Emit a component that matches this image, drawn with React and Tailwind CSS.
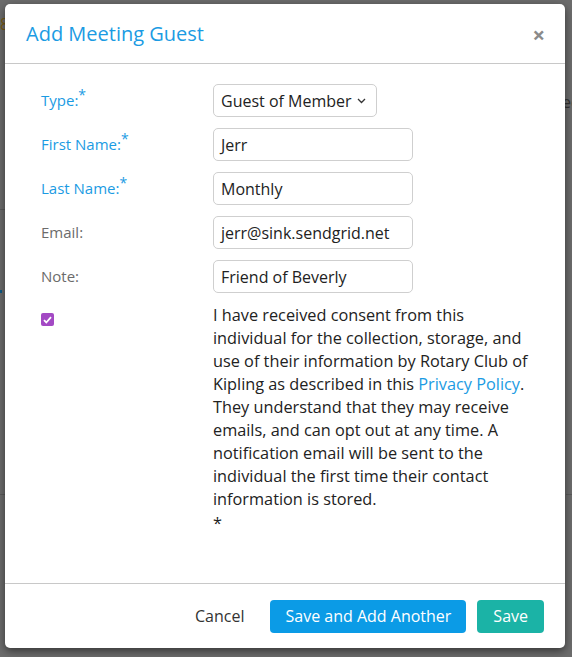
import React from "react";

const font = { fontFamily: '"Open Sans", "Noto Sans", sans-serif' };

function Field({ label, required, children }) {
  return (
    <div className="flex items-center h-[33px]">
      <div
        className={`w-[172px] shrink-0 text-[15px] ${
          required ? "text-[#1b9be3]" : "text-[#6b6b6b]"
        }`}
      >
        {label}
        {required && <sup className="text-[14px] top-[-0.45em]">*</sup>}
      </div>
      {children}
    </div>
  );
}

function TextInput({ value }) {
  return (
    <div className="w-[200px] h-[33px] border border-[#cfcfcf] rounded-[5px] px-[7px] flex items-center text-[16px] text-[#222]">
      {value}
    </div>
  );
}

export default function App() {
  return (
    <div className="relative w-[572px] h-[657px] bg-[#6c6c6c] overflow-hidden" style={font}>
      {/* dimmed page behind the modal */}
      <div className="absolute left-0 top-[12px] text-[16px] text-[#7a5a10]">8</div>
      <div className="absolute left-[562px] top-[90px] text-[16px] text-[#333]">ec</div>
      <div className="absolute left-0 top-[209px] w-[6px] h-px bg-[#5a5a5a]" />
      <div className="absolute left-0 top-[290px] w-[2px] h-[3px] bg-[#0d5a86]" />
      <div className="absolute left-0 top-[494px] w-[6px] h-px bg-[#5a5a5a]" />
      <div className="absolute left-[566px] top-[494px] w-[6px] h-px bg-[#5a5a5a]" />

      {/* modal */}
      <div className="absolute left-[5px] top-[4px] w-[560px] h-[644px] bg-white rounded-[5px] shadow-[0_3px_9px_rgba(0,0,0,0.5)] flex flex-col">
        <div className="h-[60px] shrink-0 flex items-center justify-between pl-[21px] pr-[20px] border-b border-[#c8c8c8]">
          <h1 className="text-[20px] text-[#1b9be3]">Add Meeting Guest</h1>
          <span className="text-[22px] font-bold text-[#8a8a8a] leading-none">×</span>
        </div>

        <div className="flex-1 pt-[20px] pl-[36px] pr-[20px] flex flex-col gap-[11px]">
          <Field label="Type:" required>
            <div className="w-[164px] h-[33px] border border-[#cfcfcf] rounded-[5px] pl-[7px] pr-[10px] flex items-center justify-between text-[16px] text-[#222]">
              <span>Guest of Member</span>
              <svg width="9" height="6" viewBox="0 0 9 6" fill="none">
                <path d="M1 1l3.5 3.5L8 1" stroke="#333" strokeWidth="1.3" />
              </svg>
            </div>
          </Field>
          <Field label="First Name:" required>
            <TextInput value="Jerr" />
          </Field>
          <Field label="Last Name:" required>
            <TextInput value="Monthly" />
          </Field>
          <Field label="Email:">
            <TextInput value="jerr@sink.sendgrid.net" />
          </Field>
          <Field label="Note:">
            <TextInput value="Friend of Beverly" />
          </Field>

          <div className="flex">
            <div className="w-[172px] shrink-0 pt-[9px]">
              <div className="w-[13px] h-[13px] rounded-[2px] bg-[#a349c4] flex items-center justify-center">
                <svg width="9" height="8" viewBox="0 0 9 8" fill="none">
                  <path d="M1 4.2l2.3 2.3L8 1.2" stroke="white" strokeWidth="1.8" />
                </svg>
              </div>
            </div>
            <div className="text-[16.3px] leading-[23px] text-[#222] w-[325px]">
              <p>
                I have received consent from this individual for the collection, storage, and
                use of their information by Rotary Club of Kipling as described in this{" "}
                <span className="text-[#1b9be3]">Privacy Policy</span>. They understand that
                they may receive emails, and can opt out at any time. A notification email will
                be sent to the individual the first time their contact information is stored.
              </p>
              <p className="mt-[1px]">*</p>
            </div>
          </div>
        </div>

        <div className="h-[65px] shrink-0 border-t border-[#c8c8c8] flex items-center justify-end gap-[11px] pr-[21px]">
          <button className="px-[12px] h-[33px] text-[16px] text-[#333] mr-[3px]">Cancel</button>
          <button className="px-[15px] h-[33px] rounded-[4px] bg-[#0b9be6] text-white text-[16px]">
            Save and Add Another
          </button>
          <button className="px-[16px] h-[33px] rounded-[4px] bg-[#1bb3a6] text-white text-[16px]">
            Save
          </button>
        </div>
      </div>
    </div>
  );
}
